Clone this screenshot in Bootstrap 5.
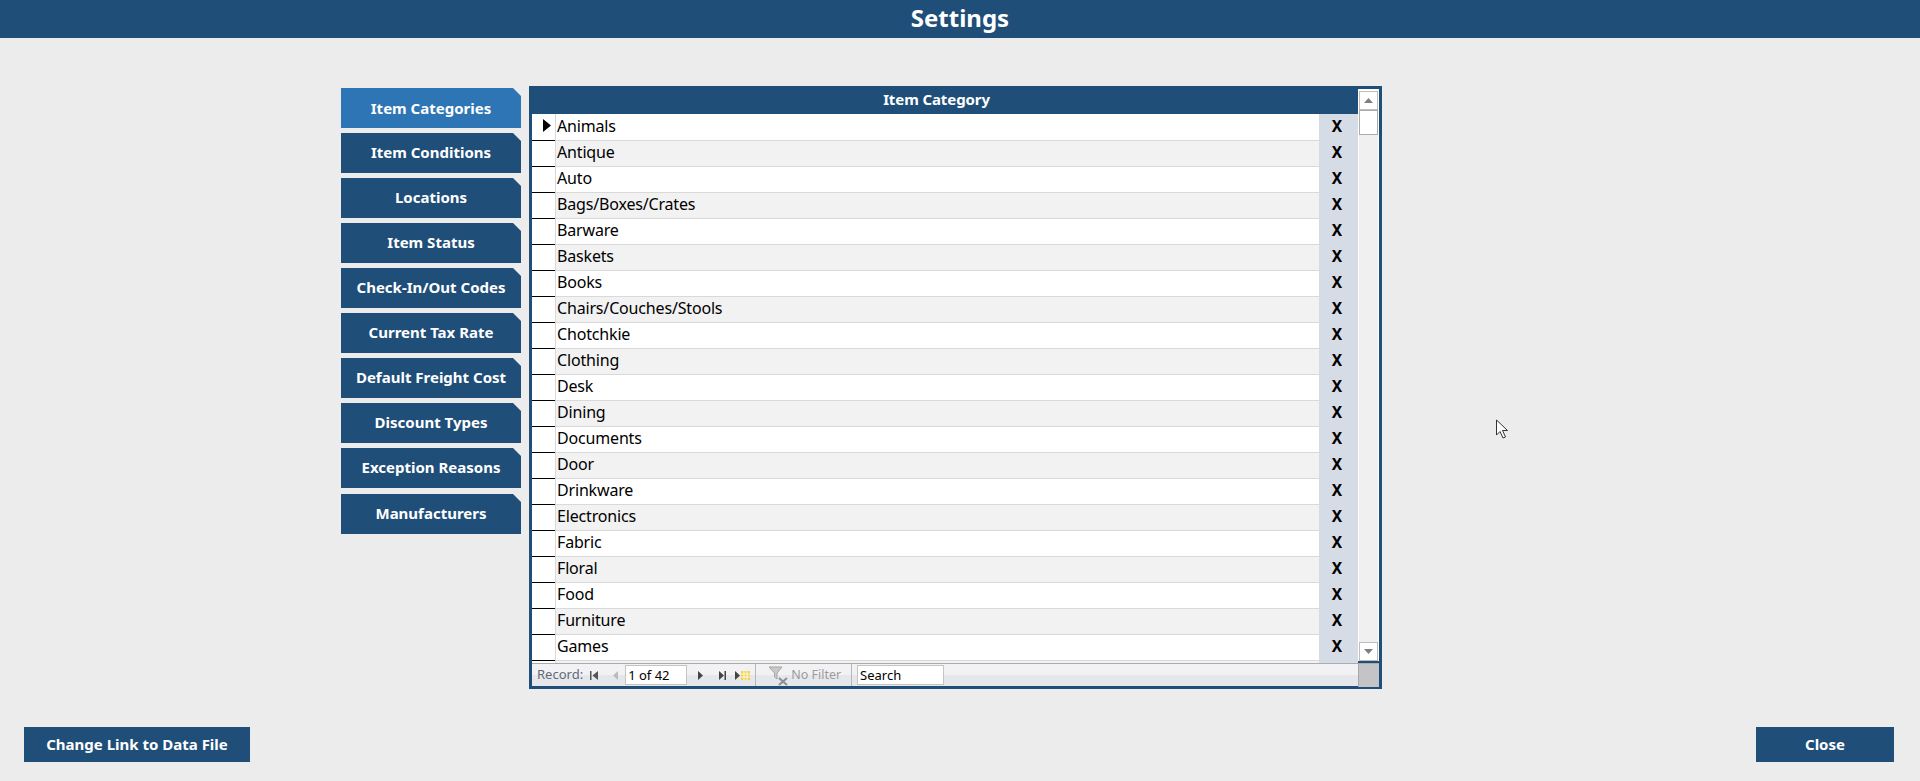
<!DOCTYPE html>
<html lang="en">
<head>
<meta charset="utf-8">
<title>Settings</title>
<link href="https://cdn.jsdelivr.net/npm/bootstrap@5.3.0/dist/css/bootstrap.min.css" rel="stylesheet">
<style>
html,body{height:781px;overflow:hidden}
body{background:#ececec;font-family:"Noto Sans","Open Sans",sans-serif;position:relative;color:#000}
.app-head{height:38px;background:#1f4e79;color:#fff;font-size:24px;font-weight:700;line-height:36px;text-align:center}
.workspace{padding:48px 0 0 341px;height:689px}
.side-col{width:180px;margin-top:2px;margin-right:8px}
.side-btn{display:block;width:180px;height:40px;margin-bottom:5px;background:#1f4e79;color:#fff;border:0;padding:0 0 2px;font-size:15px;font-weight:700;text-align:center;clip-path:polygon(0 0,172px 0,180px 8px,180px 100%,0 100%)}
.side-btn.is-on{background:#2e75b6;padding-bottom:0}
.side-btn.is-last{margin-top:1px}
.grid-frame{width:853px;height:603px;background:#1f4e79;padding:3px;position:relative}
.grid-main{height:574px}
.grid-body{width:826px}
.grid-title{margin-left:-3px;margin-top:-3px;width:829px;height:28px;color:#fff;font-size:15px;font-weight:700;letter-spacing:-.1px;line-height:26px;text-align:center;padding-right:14px}
.grid-row{height:26px;display:flex;font-size:16px;line-height:23px}
.grid-row:first-child{height:27px}
.grid-row:first-child .txt-cell,.grid-row:first-child .del-cell{padding-top:1px}
.sel-cell{width:23px;background:#fff;border-bottom:1px solid #000;position:relative}
.txt-cell{width:764px;padding-left:1px;border-left:1px solid #d9d9d9;background:#fff;border-bottom:1px solid #d9d9d9;letter-spacing:-.17px}
.grid-row:nth-child(even) .txt-cell{background:#f2f2f2}
.del-cell{width:39px;background:#d6dce5;font-weight:700;text-align:center;font-size:15.5px;padding-right:3px}
.tail-row{height:2px;display:flex}
.tail-row .sel-cell{border:0}
.tail-row .txt-cell{border-bottom:0;background:#f2f2f2}
.sel-mark{position:absolute;left:11px;top:5px}
.scroll-col{width:21px;background:#f0f0f0;border:solid #fff;border-width:2px 1px 0 1px;height:572px;display:flex;flex-direction:column;align-items:stretch}
.scroll-btn{height:19px;background:#fff;border:1px solid #bdbdbd;display:flex;align-items:center;justify-content:center}
.scroll-thumb{height:25px;background:#fff;border:1px solid #ababab}
.scroll-fill{flex:1}
.nav-strip{height:23px;background:linear-gradient(#f2f2f4 0 50%,#e6e7ea 50% 100%);border-top:1px solid #ababab;display:flex;align-items:center;font-size:13px;color:#5f6a76;padding-left:5px;position:relative}
.nav-inbox{background:#fff;border:1px solid #c4c4c4;height:20px;line-height:18px;color:#000;padding-left:2px;font-size:13px}
.nav-sep{width:1px;height:22px;background:#b8b8b8}
.nav-end{width:21px;height:23px;background:#c4c4c6;margin-left:auto;border-left:1px solid #a8a8a8}
.foot-btn{position:absolute;top:727px;height:35px;background:#1f4e79;color:#fff;border:0;font-size:15px;font-weight:700;padding:0}
.foot-l{left:24px;width:226px}
.foot-r{left:1756px;width:138px}
.mouse-pt{position:absolute;left:1495px;top:419px}
</style>
</head>
<body>
<header class="app-head">Settings</header>
<main class="workspace d-flex align-items-start">
  <nav class="side-col d-flex flex-column">
    <button class="side-btn is-on">Item Categories</button>
    <button class="side-btn">Item Conditions</button>
    <button class="side-btn">Locations</button>
    <button class="side-btn">Item Status</button>
    <button class="side-btn">Check-In/Out Codes</button>
    <button class="side-btn">Current Tax Rate</button>
    <button class="side-btn">Default Freight Cost</button>
    <button class="side-btn">Discount Types</button>
    <button class="side-btn">Exception Reasons</button>
    <button class="side-btn is-last">Manufacturers</button>
  </nav>
  <section class="grid-frame">
    <div class="grid-main d-flex">
      <div class="grid-body">
        <div class="grid-title">Item Category</div>
        <div class="grid-rows">
          <div class="grid-row"><div class="sel-cell"><svg class="sel-mark" width="8" height="13" viewBox="0 0 8 13"><path d="M0 0L8 6.500L0 13Z" fill="#000"/></svg></div><div class="txt-cell">Animals</div><div class="del-cell">X</div></div>
          <div class="grid-row"><div class="sel-cell"></div><div class="txt-cell">Antique</div><div class="del-cell">X</div></div>
          <div class="grid-row"><div class="sel-cell"></div><div class="txt-cell">Auto</div><div class="del-cell">X</div></div>
          <div class="grid-row"><div class="sel-cell"></div><div class="txt-cell">Bags/Boxes/Crates</div><div class="del-cell">X</div></div>
          <div class="grid-row"><div class="sel-cell"></div><div class="txt-cell">Barware</div><div class="del-cell">X</div></div>
          <div class="grid-row"><div class="sel-cell"></div><div class="txt-cell">Baskets</div><div class="del-cell">X</div></div>
          <div class="grid-row"><div class="sel-cell"></div><div class="txt-cell">Books</div><div class="del-cell">X</div></div>
          <div class="grid-row"><div class="sel-cell"></div><div class="txt-cell">Chairs/Couches/Stools</div><div class="del-cell">X</div></div>
          <div class="grid-row"><div class="sel-cell"></div><div class="txt-cell">Chotchkie</div><div class="del-cell">X</div></div>
          <div class="grid-row"><div class="sel-cell"></div><div class="txt-cell">Clothing</div><div class="del-cell">X</div></div>
          <div class="grid-row"><div class="sel-cell"></div><div class="txt-cell">Desk</div><div class="del-cell">X</div></div>
          <div class="grid-row"><div class="sel-cell"></div><div class="txt-cell">Dining</div><div class="del-cell">X</div></div>
          <div class="grid-row"><div class="sel-cell"></div><div class="txt-cell">Documents</div><div class="del-cell">X</div></div>
          <div class="grid-row"><div class="sel-cell"></div><div class="txt-cell">Door</div><div class="del-cell">X</div></div>
          <div class="grid-row"><div class="sel-cell"></div><div class="txt-cell">Drinkware</div><div class="del-cell">X</div></div>
          <div class="grid-row"><div class="sel-cell"></div><div class="txt-cell">Electronics</div><div class="del-cell">X</div></div>
          <div class="grid-row"><div class="sel-cell"></div><div class="txt-cell">Fabric</div><div class="del-cell">X</div></div>
          <div class="grid-row"><div class="sel-cell"></div><div class="txt-cell">Floral</div><div class="del-cell">X</div></div>
          <div class="grid-row"><div class="sel-cell"></div><div class="txt-cell">Food</div><div class="del-cell">X</div></div>
          <div class="grid-row"><div class="sel-cell"></div><div class="txt-cell">Furniture</div><div class="del-cell">X</div></div>
          <div class="grid-row"><div class="sel-cell"></div><div class="txt-cell">Games</div><div class="del-cell">X</div></div>
          <div class="tail-row"><div class="sel-cell"></div><div class="txt-cell"></div><div class="del-cell"></div></div>
        </div>
      </div>
      <div class="scroll-col">
        <div class="scroll-btn"><svg width="9" height="5" viewBox="0 0 9 5"><path d="M4.500 0L9 5H0Z" fill="#7f7f7f"/></svg></div>
        <div class="scroll-thumb"></div>
        <div class="scroll-fill"></div>
        <div class="scroll-btn"><svg width="9" height="5" viewBox="0 0 9 5"><path d="M0 0H9L4.500 5Z" fill="#7f7f7f"/></svg></div>
      </div>
    </div>
    <div class="nav-strip">
      <span>Record:</span>
      <svg width="8" height="9" viewBox="0 0 8 9" style="margin-left:7px"><path d="M0 0H1.500V9H0ZM8 0V9L2.500 4.500Z" fill="#555"/></svg>
      <svg width="5" height="9" viewBox="0 0 5 9" style="margin-left:15px"><path d="M5 0V9L0 4.500Z" fill="#bbb"/></svg>
      <span class="nav-inbox" style="width:62px;margin-left:7px">1 of 42</span>
      <svg width="5" height="9" viewBox="0 0 5 9" style="margin-left:11px"><path d="M0 0V9L5 4.500Z" fill="#444"/></svg>
      <svg width="7" height="9" viewBox="0 0 7 9" style="margin-left:16px"><path d="M0 0V9L5 4.500ZM5.500 0H7V9H5.500Z" fill="#444"/></svg>
      <svg width="15" height="9" viewBox="0 0 15 9" style="margin-left:9px"><path d="M0 0V9L5 4.500Z" fill="#444"/><rect x="6" y="0" width="9" height="9" fill="#f3d24f"/><path d="M6 3H15M6 6H15M9 0V9M12 0V9" stroke="#fff" stroke-width=".8"/></svg>
      <span class="nav-sep" style="margin-left:5px"></span>
      <svg width="19" height="22" viewBox="0 0 19 22" style="margin-left:13px"><path d="M0 3H13L8 9V15L5.500 13V9Z" fill="#c9c9c9" stroke="#a5a5a5"/><path d="M10 14L18 21M18 14L10 21" stroke="#8a8f96" stroke-width="2"/></svg>
      <span style="margin-left:3px;color:#9a9a9a;font-size:12.5px">No Filter</span>
      <span class="nav-sep" style="margin-left:10px"></span>
      <span class="nav-inbox" style="width:87px;margin-left:5px">Search</span>
      <span class="nav-end"></span>
    </div>
  </section>
</main>
<button class="foot-btn foot-l">Change Link to Data File</button>
<button class="foot-btn foot-r">Close</button>
<svg class="mouse-pt" width="14" height="21" viewBox="0 0 14 21"><path d="M1.500 1V16L5 12.500L8 19L10.500 18L7.500 11.500H12.500Z" fill="#fff" stroke="#333" stroke-width="1"/></svg>
</body>
</html>
